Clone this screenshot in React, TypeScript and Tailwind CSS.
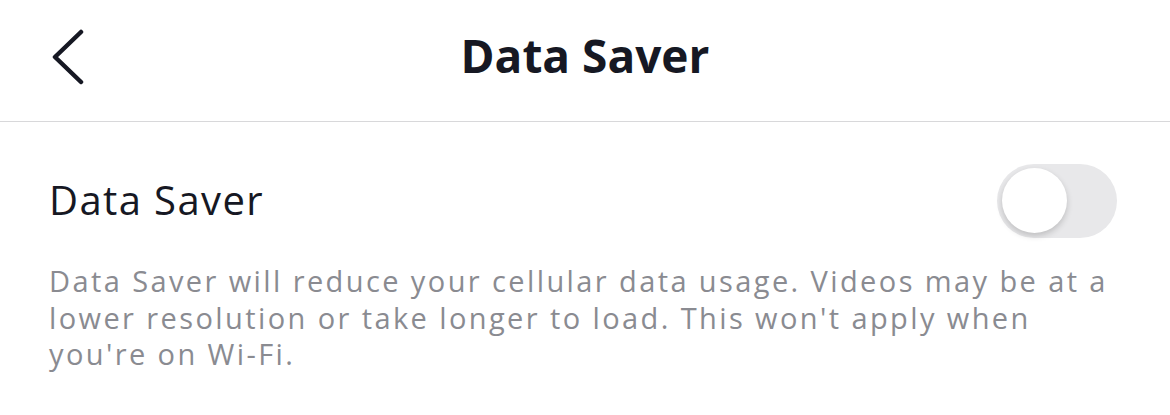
import { useState } from "react";

function BackIcon() {
  return (
    <svg width="36" height="56" viewBox="0 0 36 56" fill="none">
      <path
        d="M30 3 L4 28 L30 53"
        stroke="#161823"
        strokeWidth="4.5"
        strokeLinecap="round"
        strokeLinejoin="round"
      />
    </svg>
  );
}

export default function App() {
  const [on, setOn] = useState(false);

  return (
    <div className="w-[1170px] h-[415px] bg-white font-['Open_Sans',sans-serif] overflow-hidden">
      {/* Header */}
      <header className="relative h-[122px] flex items-center justify-center border-b border-[#d8d8da]">
        <button className="absolute left-[51px] top-[29px]">
          <BackIcon />
        </button>
        <h1 className="text-[46px] font-bold text-[#161823] -mt-[11px]">
          Data Saver
        </h1>
      </header>

      {/* Setting row */}
      <div className="pl-[49px] pr-[53px] pt-[41px]">
        <div className="flex items-center justify-between h-[75px]">
          <span className="text-[40px] tracking-[1.4px] text-[#161823] -mt-[2px]">Data Saver</span>
          <button
            onClick={() => setOn(!on)}
            className="w-[120px] h-[74px] rounded-full bg-[#e8e8ea] p-[5px] flex items-center"
          >
            <span className="w-[65px] h-[65px] rounded-full bg-white shadow-[0_3px_6px_rgba(0,0,0,0.18)]" />
          </button>
        </div>
        <p className="mt-[25px] text-[29px] leading-[36.5px] tracking-[2.4px] text-[#8a8b91]">
          Data Saver will reduce your cellular data usage. Videos may be at a lower
          resolution or take longer to load. This won't apply when you're on Wi-Fi.
        </p>
      </div>
    </div>
  );
}
